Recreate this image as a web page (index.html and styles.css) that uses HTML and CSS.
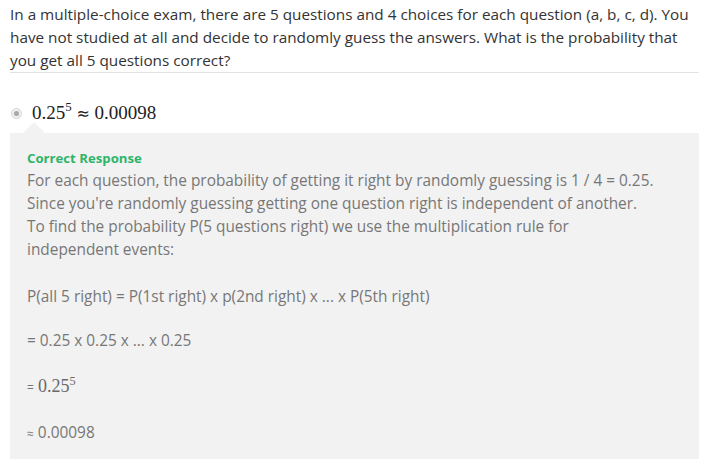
FILE: index.html
```html
<!DOCTYPE html>
<html>
<head>
<meta charset="utf-8">
<link rel="stylesheet" href="styles.css">
</head>
<body>
<div class="page">
  <div class="question">In a multiple-choice exam, there are 5 questions and 4 choices for each question (a, b, c, d). You have not studied at all and decide to randomly guess the answers. What is the probability that you get all 5 questions correct?</div>
  <div class="answer">
    <span class="radio"><span class="dot"></span></span>
    <span class="math big">0.25<sup>5</sup> <span class="approx">≈</span> 0.00098</span>
  </div>
  <div class="feedback">
    <div class="label">Correct Response</div>
    <p class="p1">For each question, the probability of getting it right by randomly guessing is 1 / 4 = 0.25. Since you're randomly guessing getting one question right is independent of another. To find the probability P(5 questions right) we use the multiplication rule for independent events:</p>
    <p class="p2">P(all 5 right) = P(1st right) x p(2nd right) x ... x P(5th right)</p>
    <p class="p3">= 0.25 x 0.25 x ... x 0.25</p>
    <p class="mathline"><span class="eq">=</span> <span class="math">0.25<sup>5</sup></span></p>
    <p class="last"><span class="sm">≈</span> 0.00098</p>
  </div>
</div>
</body>
</html>
```

FILE: styles.css
```css
html, body {
  margin: 0;
  padding: 0;
  background: #fff;
}
.page {
  width: 689px;
  margin-left: 10px;
  padding-top: 3px;
  font-family: "Open Sans", "Liberation Sans", sans-serif;
}
.question {
  font-size: 15.3px;
  line-height: 23px;
  color: #333;
  border-bottom: 1px solid #e2e2e2;
}
.answer {
  display: flex;
  align-items: center;
  height: 40px;
  margin-top: 20px;
  gap: 10px;
}
.radio {
  width: 11px;
  height: 11px;
  margin-left: 1px;
  border-radius: 50%;
  background: #eeeeee;
  border: 1px solid #d8d8d8;
  box-sizing: border-box;
  display: flex;
  align-items: center;
  justify-content: center;
}
.dot {
  width: 5px;
  height: 5px;
  border-radius: 50%;
  background: #a8a8a8;
}
.math {
  font-family: "Liberation Serif", "DejaVu Serif", serif;
}
.math sup {
  font-size: 0.68em;
  vertical-align: 0.6em;
  line-height: 0;
}
.big {
  font-size: 19px;
  color: #222;
}
.approx {
  font-family: "DejaVu Sans", sans-serif;
  font-size: 16px;
}
.feedback {
  position: relative;
  background: #f2f2f2;
  padding: 15px 43px 14px 17px;
  color: #777;
  font-size: 15.4px;
  line-height: 23px;
}
.feedback::before {
  content: "";
  position: absolute;
  left: 13px;
  top: -11px;
  border-left: 11px solid transparent;
  border-right: 11px solid transparent;
  border-bottom: 11px solid #f2f2f2;
}
.label {
  color: #2db56a;
  font-weight: 700;
  font-size: 13.2px;
  line-height: 21px;
}
.feedback p {
  margin: 0;
}
.feedback .p1 {
  margin-bottom: 24px;
}
.feedback .p2 {
  margin-bottom: 21px;
}
.feedback .p3 {
  margin-bottom: 23px;
}
.feedback .mathline {
  height: 23px;
  margin-bottom: 23px;
}
.mathline .math {
  font-size: 18px;
  color: #6a6a6a;
}
.eq {
  font-size: 12px;
}
.sm {
  font-size: 12px;
}
```
